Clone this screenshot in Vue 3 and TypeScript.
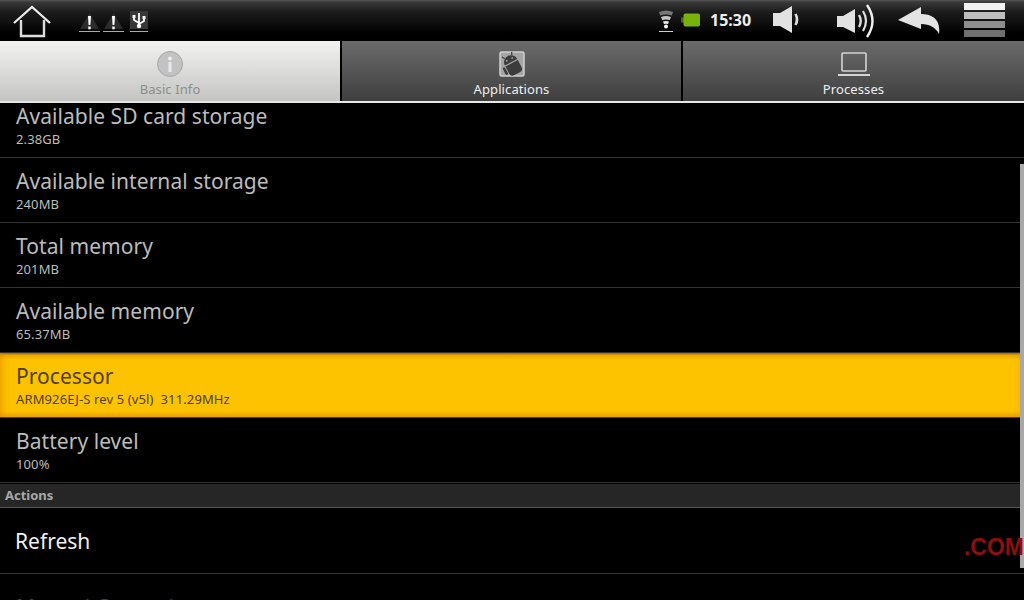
<template>
  <div class="screen">
    <header class="status">
      <svg class="home" width="40" height="36" viewBox="0 0 40 36">
        <path d="M2 21 L20 5 L38 21" fill="none" stroke="#eee" stroke-width="2.2" />
        <path d="M9 18 V34 H32 V18" fill="none" stroke="#ddd" stroke-width="2.4" />
      </svg>
      <div class="notes">
        <svg v-for="n in 2" :key="n" width="21" height="22" viewBox="0 0 21 22">
          <path d="M10.500 2 L20 18 H1 Z" fill="#3a3a3a" opacity="0.7" />
          <path d="M9 5 H12 L11.400 14 H9.600 Z" fill="#fff" />
          <rect x="9.300" y="15.500" width="2.400" height="2.800" fill="#fff" />
          <rect x="0" y="20" width="21" height="1" fill="#aaa" />
        </svg>
        <svg class="usb" width="18" height="22" viewBox="0 0 18 22">
          <rect x="0" y="0" width="18" height="18" fill="#383838" />
          <path d="M9 2 V16 M9 12 L4 9 V6 M9 13 L14 10 V7" stroke="#fff" stroke-width="1.800" fill="none" />
          <circle cx="9" cy="15" r="2.200" fill="#fff" />
          <rect x="2.500" y="4" width="3" height="3" fill="#fff" />
          <rect x="12.500" y="5" width="3" height="3" fill="#fff" />
          <rect x="0" y="20" width="18" height="1" fill="#aaa" />
        </svg>
      </div>
      <div class="spacer"></div>
      <svg class="wifi" width="16" height="24" viewBox="0 0 16 24">
        <path d="M1 3 Q8 0 15 3 L13.800 6.500 Q8 4.500 2.200 6.500 Z" fill="#777" />
        <path d="M3 8 Q8 6 13 8 L11.800 11 Q8 9.800 4.200 11 Z" fill="#c4c4c4" />
        <path d="M5 12.500 Q8 11.500 11 12.500 L10 15 Q8 14.400 6 15 Z" fill="#eee" />
        <circle cx="8" cy="17.500" r="2" fill="#fff" />
        <rect x="1" y="22" width="14" height="1" fill="#ccc" />
      </svg>
      <svg class="batt" width="20" height="14" viewBox="0 0 20 14">
        <rect x="0" y="4.500" width="3" height="5" fill="#4c6a12" />
        <rect x="2.500" y="0.500" width="16.500" height="13" rx="2" fill="#78b30d" />
      </svg>
      <span class="clock">15:30</span>
      <svg class="vol-down" width="27" height="28" viewBox="0 0 27 28">
        <path d="M0 7 H7 L19 0 V27 L7 20 H0 Z" fill="#e2e2e2" />
        <path d="M22.500 8 Q25.500 13.500 22.500 19" stroke="#ddd" stroke-width="2.600" fill="none" />
      </svg>
      <svg class="vol-up" width="38" height="36" viewBox="0 0 38 36">
        <path d="M0 13 H6 L18 6 V30 L6 24 H0 Z" fill="#e2e2e2" />
        <path d="M22 12 Q25.500 18 22 24" stroke="#ddd" stroke-width="2.400" fill="none" />
        <path d="M26 8 Q32 18 26 28" stroke="#ddd" stroke-width="2.200" fill="none" />
        <path d="M30 2 Q41 18 30 34" stroke="#eee" stroke-width="2.400" fill="none" />
      </svg>
      <svg class="back" width="42" height="28" viewBox="0 0 42 28">
        <path d="M0 13 L23 0 V7 C34 7 43 12 41 27 C38 21 32 17 23 17 V22 Z" fill="#e4e4e4" />
      </svg>
      <div class="menu">
        <i class="m1"></i><i class="m2"></i><i class="m3"></i><i class="m4"></i>
      </div>
    </header>

    <nav class="tabs">
      <div v-for="t in tabs" :key="t.label" class="tab" :class="{ active: t.active }">
        <svg v-if="t.icon === 'info'" width="26" height="26" viewBox="0 0 26 26">
          <circle cx="13" cy="13" r="12.500" fill="#c2c2c2" stroke="#a8a8a8" />
          <circle cx="13" cy="7.500" r="2" fill="#eee" />
          <rect x="11.500" y="11" width="3" height="10" fill="#e8e8e8" />
        </svg>
        <svg v-else-if="t.icon === 'apps'" width="26" height="26" viewBox="0 0 26 26">
          <rect x="1" y="1" width="24" height="24" rx="1.500" fill="#a4a4a4" stroke="#cfcfcf" stroke-width="1.500" />
          <g transform="rotate(-28 13 13)">
            <path d="M6 11 a7 7 0 0 1 14 0 Z" fill="#3c3c3c" />
            <path d="M9 5 L7.500 2 M17 5 L18.500 2" stroke="#3c3c3c" stroke-width="1.200" />
            <circle cx="10" cy="7.800" r="0.900" fill="#a4a4a4" />
            <circle cx="16" cy="7.800" r="0.900" fill="#a4a4a4" />
            <path d="M6 12.200 H20 V20 Q20 24 16 24 H10 Q6 24 6 20 Z" fill="#3c3c3c" />
            <rect x="2.500" y="12.200" width="2.600" height="8" rx="1.300" fill="#3c3c3c" />
          </g>
        </svg>
        <svg v-else width="32" height="26" viewBox="0 0 32 26">
          <rect x="4" y="2" width="24" height="18" rx="1" fill="none" stroke="#d4d4d4" stroke-width="1.600" />
          <rect x="0" y="23" width="32" height="2" fill="#d4d4d4" />
        </svg>
        <span>{{ t.label }}</span>
      </div>
    </nav>
    <div class="tab-rule"></div>

    <main class="list">
      <div class="rows">
        <div v-for="r in rows" :key="r.title" class="row" :class="{ selected: r.selected }">
          <div class="title">{{ r.title }}</div>
          <div class="sub">{{ r.sub }}</div>
        </div>
        <div class="section">Actions</div>
        <div class="row action"><div class="action-title">Refresh</div></div>
        <div class="row last"><div class="title dim">Manual Correction</div></div>
      </div>
      <div class="scrollbar"></div>
      <div class="watermark">.COM</div>
    </main>
  </div>
</template>

<script setup lang="ts">
interface Tab {
  label: string
  icon: string
  active?: boolean
}

interface Row {
  title: string
  sub: string
  selected?: boolean
}

const tabs: Tab[] = [
  { label: 'Basic Info', icon: 'info', active: true },
  { label: 'Applications', icon: 'apps' },
  { label: 'Processes', icon: 'laptop' },
]

const rows: Row[] = [
  { title: 'Available SD card storage', sub: '2.38GB' },
  { title: 'Available internal storage', sub: '240MB' },
  { title: 'Total memory', sub: '201MB' },
  { title: 'Available memory', sub: '65.37MB' },
  { title: 'Processor', sub: 'ARM926EJ-S rev 5 (v5l)  311.29MHz', selected: true },
  { title: 'Battery level', sub: '100%' },
]
</script>

<style>
html,
body {
  background: #000;
}
</style>

<style scoped>
.screen {
  width: 1024px;
  height: 600px;
  overflow: hidden;
  background: #000;
  font-family: "Noto Sans", "Open Sans", sans-serif;
  display: flex;
  flex-direction: column;
}

.status {
  height: 40px;
  flex: none;
  display: flex;
  align-items: center;
  background: linear-gradient(#555 0, #3a3a3a 2px, #1c1c1c 12px, #000 34px);
  padding-right: 19px;
  box-sizing: border-box;
}

.home {
  margin-left: 12px;
}

.notes {
  display: flex;
  gap: 3px;
  margin-left: 27px;
  margin-top: 4px;
}

.usb {
  margin-left: 3px;
}

.spacer {
  flex: 1;
}

.wifi {
  margin-top: 2px;
}

.batt {
  margin-left: 7px;
}

.clock {
  margin-left: 9px;
  color: #eee;
  font-size: 16px;
  font-weight: 700;
  width: 41px;
}

.vol-down {
  margin-left: 22px;
}

.vol-up {
  margin-left: 37px;
  margin-top: 2px;
}

.back {
  margin-left: 23px;
  margin-top: 2px;
}

.menu {
  margin-left: 24px;
  width: 41px;
  display: flex;
  flex-direction: column;
  gap: 2px;
}

.menu i {
  display: block;
  height: 7px;
}

.m1 { background: #f2f2f2; }
.m2 { background: #bdbdbd; }
.m3 { background: #8e8e8e; }
.m4 { background: #707070; }

.tabs {
  height: 60px;
  margin-top: 1px;
  flex: none;
  display: grid;
  grid-template-columns: 340px 339px 1fr;
  gap: 2px;
}

.tab {
  display: flex;
  flex-direction: column;
  align-items: center;
  justify-content: flex-end;
  background: linear-gradient(#6b6b6b, #3f3f3f);
  color: #eee;
  font-size: 13px;
  letter-spacing: 0.1px;
  line-height: 18px;
  gap: 3px;
  padding-bottom: 3px;
  box-sizing: border-box;
}

.tab.active {
  background: linear-gradient(#f2f3f0, #c4c5c3);
  color: #8c8c8c;
}

.tab-rule {
  height: 2px;
  flex: none;
  background: #e6e6e6;
}

.list {
  flex: 1;
  position: relative;
  overflow: hidden;
}

.rows {
  margin-top: -10px;
}

.row {
  height: 65px;
  box-sizing: border-box;
  border-bottom: 1px solid #333;
  padding: 9px 16px 0;
}

.row.selected {
  background: linear-gradient(#8a6300, #e8a800 2px, #fdc200 7px, #fdc200 58px, #e8a500);
  box-shadow: inset 6px 0 6px -4px rgba(226, 140, 0, 0.7), inset -6px 0 6px -4px rgba(226, 140, 0, 0.7);
  border-bottom: 1px solid #5a4500;
}

.title {
  font-size: 21px;
  line-height: 28px;
  color: #bcbcbc;
  letter-spacing: 0.05px;
}

.title.dim {
  color: #444;
}

.sub {
  font-size: 13px;
  line-height: 18px;
  color: #bcbcbc;
  letter-spacing: 0.12px;
  white-space: pre;
}

.selected .title,
.selected .sub {
  color: #4f3f08;
}

.section {
  margin-top: 1px;
  height: 24px;
  background: #262626;
  border-bottom: 1px solid #555;
  box-sizing: border-box;
  padding-left: 5px;
  color: #a8a8a8;
  font-size: 13px;
  font-weight: 700;
  line-height: 22px;
}

.row.action {
  padding: 19px 15px 0;
  height: 66px;
}

.row.last {
  padding-top: 19px;
}

.action-title {
  font-size: 21px;
  line-height: 28px;
  color: #f0f0f0;
}

.scrollbar {
  position: absolute;
  right: 0;
  top: 61px;
  width: 4px;
  height: 404px;
  background: #a8a8a8;
}

.watermark {
  position: absolute;
  right: 0;
  top: 431px;
  color: #8e0f0f;
  font-family: "Liberation Sans", sans-serif;
  font-size: 23px;
  font-weight: 700;
  line-height: 26px;
}
</style>
